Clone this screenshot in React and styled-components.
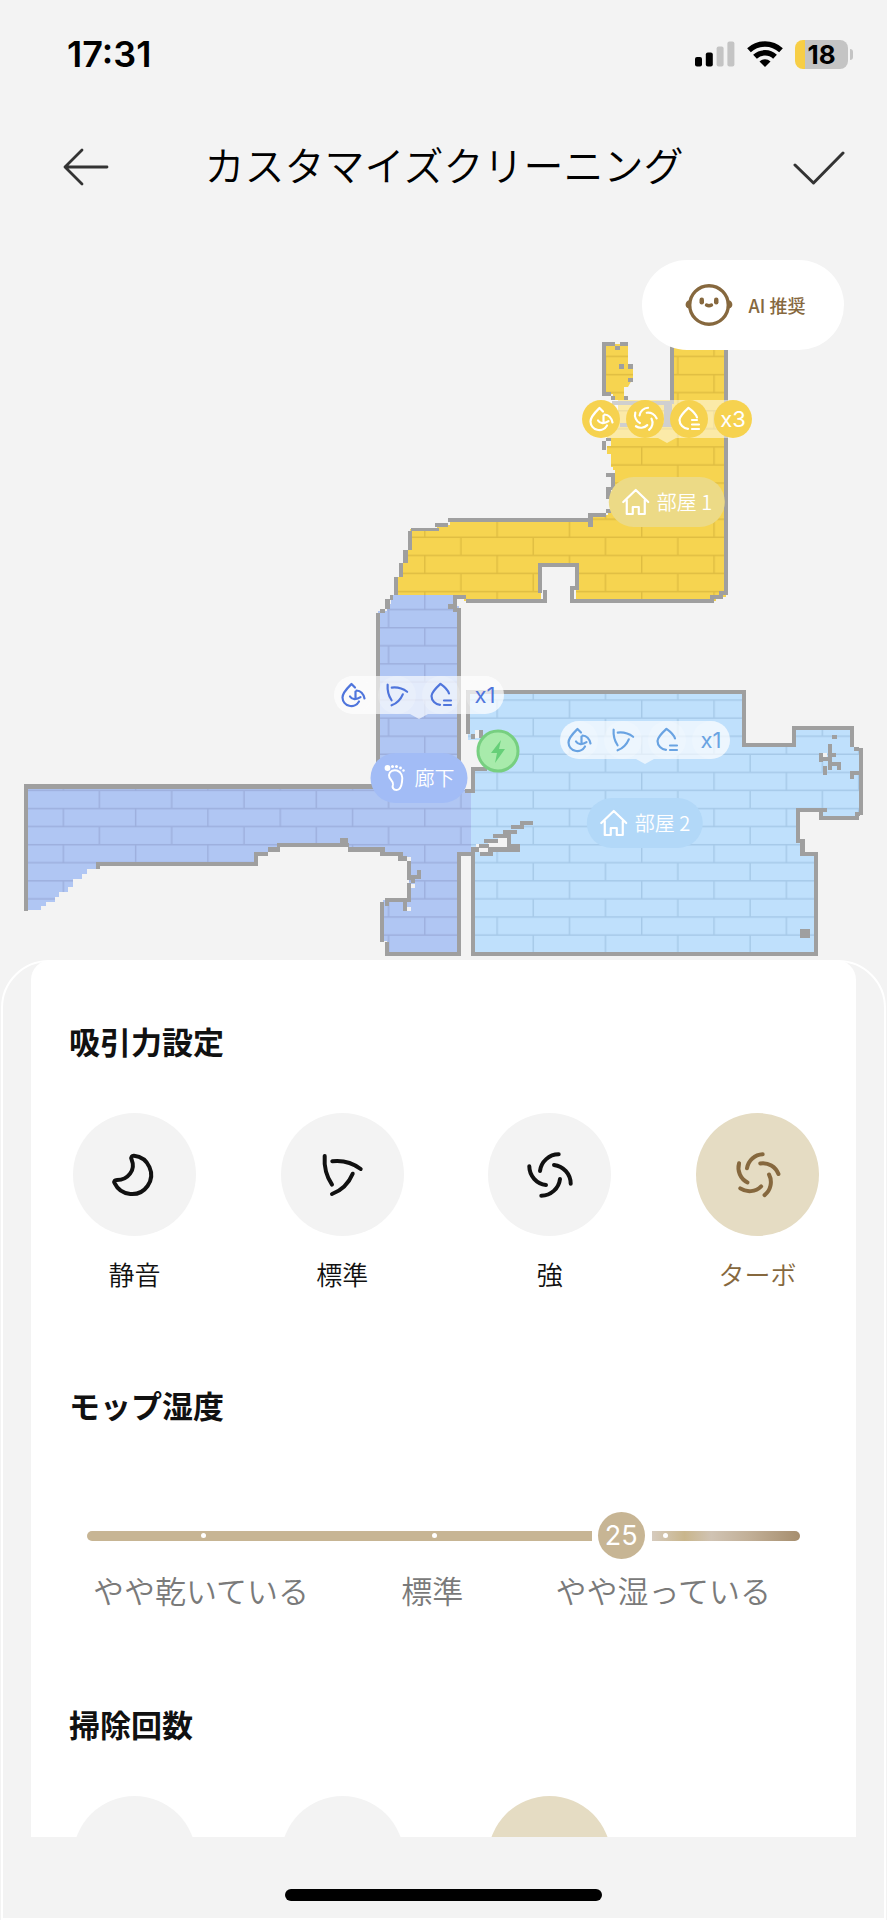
import React, { useState } from 'react';
import styled, { createGlobalStyle } from 'styled-components';

const WALL = '#9f9f9f';
const GAP = '#f3f3f3';

// floor areas, in map units
const ROOM1 = 'M606 344H628V366H633V378L628 387H624V400H670V340H726V597H716V601H576V565H541V601H464V597H396V577H400V563H405V550H410V529H437V525H450V520H590V515H608V509H612V483H615V470H611V455H607V425H618V400H613V394H606Z';
const HALL = 'M394 595H455V606H459V790H471V852H459V954H387V941H383V900H409V859H401V854H383V850H348V845H279V849H268V854H256V864H100V869H87V874H82V879H73V887H68V892H59V897H55V902H46V906H41V910H28V787H378V611H387V604H391V595Z';
const ROOM2 = 'M468 692H744V745H794V728H852V747H858V751H861V814H858V818H821V810H798V841H802V854H816V954H473V852H471V790L473 769H488V740H468Z';

const WALLS = [
  // room 1, upper left nook
  [602, 342, 4, 53], [602, 342, 13, 4], [615, 346, 5, 4], [620, 342, 8, 4], [619, 364, 5, 5],
  [628, 364, 5, 5], [628, 378, 5, 4], [602, 392, 9, 4], [611, 396, 4, 4], [624, 396, 4, 4],
  [612, 401, 60, 4], [664, 401, 8, 26], [620, 423, 48, 4], [670, 340, 4, 64],
  // room 1, east and west sides
  [724, 340, 4, 255], [606, 438, 5, 3], [602, 441, 4, 9], [606, 473, 9, 4], [611, 477, 4, 13],
  [606, 487, 5, 12], [606, 509, 5, 4], [588, 513, 18, 4], [588, 517, 5, 10],
  // room 1, lower wing
  [448, 518, 144, 4], [435, 523, 13, 4], [411, 528, 28, 3], [408, 531, 4, 19], [403, 550, 5, 13],
  [399, 563, 4, 14], [394, 577, 4, 18], [453, 595, 13, 4], [466, 599, 81, 4], [543, 590, 4, 13],
  [538, 563, 4, 30], [538, 563, 40, 4], [575, 563, 4, 27], [570, 586, 4, 17], [570, 586, 8, 4],
  [570, 599, 144, 4], [710, 595, 13, 4], [719, 591, 9, 4],
  // hallway
  [390, 595, 3, 5], [385, 599, 5, 10], [380, 609, 5, 4], [376, 613, 4, 172], [453, 597, 4, 7],
  [448, 604, 9, 5], [453, 608, 8, 4], [457, 608, 4, 158], [24, 784, 354, 5], [24, 784, 4, 127],
  [96, 862, 162, 4], [96, 866, 4, 3], [254, 852, 4, 12], [254, 852, 14, 4], [268, 847, 12, 5],
  [277, 843, 72, 4], [340, 838, 8, 5], [348, 847, 37, 5], [380, 852, 23, 4], [398, 856, 9, 5],
  [407, 861, 4, 19], [411, 875, 10, 4], [417, 870, 4, 5], [411, 879, 4, 4], [407, 883, 4, 18],
  [385, 898, 26, 4], [403, 902, 4, 9], [380, 902, 4, 40], [385, 902, 4, 4], [385, 942, 4, 14],
  [385, 952, 76, 4], [457, 852, 4, 104], [457, 852, 18, 4],
  // room 2
  [466, 690, 280, 4], [466, 690, 4, 44], [471, 734, 4, 5], [479, 730, 4, 8], [471, 767, 4, 26],
  [465, 789, 6, 4], [475, 767, 12, 4], [742, 690, 4, 57], [742, 743, 54, 4], [792, 726, 4, 20],
  [792, 726, 62, 4], [850, 726, 4, 21], [854, 747, 5, 4], [859, 748, 4, 67], [855, 812, 5, 4],
  [819, 816, 40, 4], [819, 808, 4, 12], [796, 808, 31, 4], [796, 808, 4, 35], [800, 839, 5, 17],
  [800, 852, 18, 4], [814, 852, 4, 104], [471, 952, 347, 4], [471, 852, 4, 104],
  [832, 735, 5, 4], [828, 744, 4, 26], [819, 753, 4, 9], [823, 757, 9, 4], [832, 753, 4, 4],
  [832, 762, 9, 4], [837, 762, 4, 8], [823, 766, 4, 9], [850, 771, 9, 4], [850, 775, 4, 4],
  [800, 929, 10, 9],
  // slanted obstacle by the doorway
  [520, 821, 13, 4], [511, 825, 13, 4], [503, 830, 14, 4], [493, 834, 14, 4], [484, 839, 14, 4],
  [479, 844, 10, 4], [471, 847, 8, 5], [488, 847, 32, 5], [507, 833, 4, 15], [511, 844, 9, 5],
  [480, 852, 13, 4],
];

const HOLES = [
  [498, 838, 9, 6], [488, 843, 19, 4], [479, 848, 9, 4], [407, 857, 4, 4], [411, 884, 4, 4],
  [407, 907, 4, 4], [475, 730, 4, 8], [823, 753, 4, 4], [476, 844, 3, 3],
  [607, 441, 4, 5], [607, 454, 4, 5], [607, 467, 6, 5],
];

const ROOMS = [
  { id: 'r1', fill: '#f6d450', line: '#dfbd42', path: ROOM1 },
  { id: 'hall', fill: '#b0c6f3', line: '#9dafdd', path: HALL },
  { id: 'r2', fill: '#bfe0fc', line: '#a6c9e8', path: ROOM2 },
];

const PINS = [
  { id: 'r1', tone: 'yellow', x: 667, y: 400, count: 'x3', fan: 'turbo', drop: 3 },
  { id: 'hall', tone: 'blue', x: 419, y: 676, count: 'x1', fan: 'normal', drop: 2 },
  { id: 'r2', tone: 'sky', x: 645, y: 721, count: 'x1', fan: 'normal', drop: 2 },
];

const TAGS = [
  { id: 'r1', label: '部屋 1', color: '#ecda86', x: 667, y: 477, icon: 'home' },
  { id: 'hall', label: '廊下', color: '#a2bcf6', x: 419, y: 753, icon: 'foot' },
  { id: 'r2', label: '部屋 2', color: '#b2d8f8', x: 645, y: 798, icon: 'home' },
];

const SUCTION = [
  { value: 'quiet', label: '静音' },
  { value: 'normal', label: '標準' },
  { value: 'strong', label: '強' },
  { value: 'turbo', label: 'ターボ' },
];

const MIN = 1;
const MAX = 33;

function FanPaths({ kind }) {
  if (kind === 'quiet') {
    return <path d="M-1 -19.2A19.2 19.2 0 1 1 -20.4 8.2C-21.4 6.2 -20.2 5 -18 5C-7 5 1 -5 -3.4 -15.6C-4.4 -18 -3 -19.4 -1 -19.2Z" />;
  }
  if (kind === 'normal') {
    return <path d="M-17.3 -19Q-18.5 -3 -10 9.7M-9.7 -13.7Q6 -15.5 18.7 -6M10.7 -1.3Q4.5 13.5 -10 19" />;
  }
  const turbo = kind === 'turbo';
  const blades = turbo ? [0, 72, 144, 216, 288] : [0, 90, 180, 270];
  const d = turbo ? 'M5.7 -20.7A16.5 16.5 0 0 0 -10 -6.7' : 'M8.7 -20.7A19 19 0 0 0 -10 -4';
  return blades.map((deg) => <path key={deg} d={d} transform={`rotate(${deg})`} />);
}

function FanIcon({ kind, size = 48, width = 4 }) {
  return (
    <LineIcon width={size} height={size} viewBox="-24 -24 48 48" strokeWidth={width}>
      <FanPaths kind={kind} />
    </LineIcon>
  );
}

function MopIcon() {
  return (
    <LineIcon width="26" height="26" viewBox="-13 -13 26 26" strokeWidth="2.200">
      <path d="M2 -7.500L-1.500 -11C-5 -7.500 -10.500 -2.500 -10.500 2.500A8.800 8.800 0 0 0 6 6.500" />
      <path d="M-3 1.500C-1 4.800 3.500 5 7.500 2.200M2.500 2.500V-3.500M3.500 -4.500C8 -4.200 10.500 -1 11.500 3.500" />
    </LineIcon>
  );
}

function DropIcon({ lines }) {
  return (
    <LineIcon width="26" height="26" viewBox="-13 -13 26 26" strokeWidth="2.200">
      <path d="M-1 9.800A9 9 0 0 1 -9.500 1C-9.500 -3 -4 -8 -0.500 -11.200C4 -8 7 -5 8 -1.500" />
      {lines === 3 && <path d="M3 1H8" />}
      <path d="M3 5.500H10M3 10H10" />
    </LineIcon>
  );
}

function HomeIcon() {
  return (
    <LineIcon width="28" height="28" viewBox="0 0 28 28" strokeWidth="2.200">
      <path d="M1.500 14L14 2L26.500 14M5 12V26H11V19H17V26H23V12" />
    </LineIcon>
  );
}

function FootIcon() {
  return (
    <LineIcon width="24" height="28" viewBox="0 0 24 28" strokeWidth="2">
      <path d="M5.500 11C6 7 10 5.500 13.500 6.500C18 8 19.500 13 18.500 18C18 22 16.500 26 13 26C9.500 26 8.500 23 9.500 20.500C10.500 17 5 15.500 5.500 11Z" />
      <g fill="currentColor" stroke="none">
        <circle cx="4" cy="4" r="2.900" />
        <circle cx="9" cy="2.500" r="1.500" />
        <circle cx="13" cy="2.500" r="1.500" />
        <circle cx="17" cy="4" r="1.400" />
        <circle cx="20" cy="6.500" r="1.200" />
      </g>
    </LineIcon>
  );
}

function RobotIcon() {
  return (
    <LineIcon width="50" height="44" viewBox="-25 -22 50 44" strokeWidth="3.400">
      <circle r="19.300" />
      <g fill="currentColor" stroke="none">
        <path d="M-20 -4.500C-24 -4.500 -25 3 -20 3.500ZM20 -4.500C24 -4.500 25 3 20 3.500Z" />
        <rect x="-9.500" y="-7.500" width="4.500" height="7" rx="2.200" />
        <rect x="5" y="-7.500" width="4.500" height="7" rx="2.200" />
      </g>
      <path d="M-2.500 0Q0 1.500 2.500 0" />
    </LineIcon>
  );
}

function FloorMap() {
  return (
    <MapSvg viewBox="0 240 887 720" aria-hidden="true">
      <defs>
        {ROOMS.map((r) => (
          <pattern key={r.id} id={`brick-${r.id}`} x="568.7" y="699.3" width="72.3" height="36.16" patternUnits="userSpaceOnUse">
            <rect width="72.3" height="36.16" fill={r.fill} />
            <path d="M0 0.700H72.3M0 18.780H72.3M0.700 0V18M36.850 18V36.160" stroke={r.line} strokeWidth="1.400" />
          </pattern>
        ))}
      </defs>
      {ROOMS.map((r) => <path key={r.id} d={r.path} fill={`url(#brick-${r.id})`} />)}
      <g shapeRendering="crispEdges">
        {HOLES.map(([x, y, w, h], i) => <rect key={i} x={x} y={y} width={w} height={h} fill={GAP} />)}
        {WALLS.map(([x, y, w, h], i) => <rect key={i} x={x} y={y} width={w} height={h} fill={WALL} />)}
      </g>
      <circle cx="498" cy="751" r="20" fill="#a8ebab" stroke="#77cf80" strokeWidth="3" />
      <path d="M501 740L491 753H497L495 763L505 749H499Z" fill="#66cf78" />
    </MapSvg>
  );
}

function StatusBar() {
  return (
    <Status>
      <Clock>17:31</Clock>
      <StatusIcons>
        <svg width="40" height="26" viewBox="0 0 40 26">
          <rect x="0" y="16" width="7" height="9.500" rx="2" fill="#000" />
          <rect x="10.800" y="11.500" width="7" height="14" rx="2" fill="#000" />
          <rect x="21.600" y="5.500" width="7" height="20" rx="2" fill="#c4c4c4" />
          <rect x="32.400" y="0.500" width="7" height="25" rx="2" fill="#c4c4c4" />
        </svg>
        <svg width="36" height="26" viewBox="0 0 36 26" fill="none" stroke="#000" strokeWidth="5.400">
          <path d="M2 9.300A23.500 23.500 0 0 1 34 9.300" />
          <path d="M8 15.800A14.500 14.500 0 0 1 28 15.800" />
          <path d="M18 26L12.500 20.500A8 8 0 0 1 23.500 20.500Z" fill="#000" stroke="none" />
        </svg>
        <Battery>18</Battery>
      </StatusIcons>
    </Status>
  );
}

function Options({ name, label, items, value, onChange }) {
  return (
    <OptionGrid role="radiogroup" aria-label={label}>
      {items.map((item) => (
        <Option key={item.value} $active={item.value === value}>
          <HiddenRadio
            type="radio"
            name={name}
            aria-label={item.label || item.value}
            checked={item.value === value}
            onChange={() => onChange(item.value)}
          />
          <Disc $active={item.value === value}>{item.label && <FanIcon kind={item.value} />}</Disc>
          {item.label}
        </Option>
      ))}
    </OptionGrid>
  );
}

function App() {
  const [suction, setSuction] = useState('turbo');
  const [times, setTimes] = useState('x3');
  const [water, setWater] = useState(25);
  const pos = ((water - MIN) / (MAX - MIN)) * 100;

  return (
    <>
      <GlobalStyle />
      <Screen>
        <StatusBar />
        <Header>
          <IconButton aria-label="戻る">
            <LineIcon width="46" height="38" viewBox="0 0 46 38" strokeWidth="2.800">
              <path d="M44 19H2M19 2L2 19L19 36" />
            </LineIcon>
          </IconButton>
          <Title>カスタマイズクリーニング</Title>
          <IconButton aria-label="保存">
            <LineIcon width="52" height="36" viewBox="0 0 52 36" strokeWidth="3">
              <path d="M2 16L20.500 34L50 4" />
            </LineIcon>
          </IconButton>
        </Header>

        <MapArea>
          <FloorMap />
          {PINS.map((p) => (
            <Pin key={p.id} $x={p.x} $y={p.y} $tone={p.tone}>
              <PinDot $tone={p.tone}><MopIcon /></PinDot>
              <PinDot $tone={p.tone}><FanIcon kind={p.fan} size={26} /></PinDot>
              <PinDot $tone={p.tone}><DropIcon lines={p.drop} /></PinDot>
              <PinDot $tone={p.tone}>{p.count}</PinDot>
            </Pin>
          ))}
          {TAGS.map((t) => (
            <Tag key={t.id} $x={t.x} $y={t.y} $color={t.color}>
              {t.icon === 'home' ? <HomeIcon /> : <FootIcon />}
              {t.label}
            </Tag>
          ))}
          <AiButton>
            <RobotIcon />
            AI 推奨
          </AiButton>
        </MapArea>

        <Sheet>
          <Card>
            <Heading>吸引力設定</Heading>
            <Options name="suction" label="吸引力設定" items={SUCTION} value={suction} onChange={setSuction} />

            <Heading>モップ湿度</Heading>
            <Slider>
              <Track style={{ width: `calc(${pos}% - 30px)` }} />
              <Track $rest style={{ width: `calc(${100 - pos}% - 30px)` }} />
              <Stop $at={16.4} />
              <Stop $at={48.8} />
              <Stop $at={81.2} />
              <Thumb style={{ left: `${pos}%` }}>{water}</Thumb>
              <Range
                type="range"
                aria-label="モップ湿度"
                min={MIN}
                max={MAX}
                value={water}
                onChange={(e) => setWater(Number(e.target.value))}
              />
            </Slider>
            <Scale>
              <span>やや乾いている</span>
              <span>標準</span>
              <span>やや湿っている</span>
            </Scale>

            <Heading>掃除回数</Heading>
            <Options
              name="times"
              label="掃除回数"
              items={[{ value: 'x1' }, { value: 'x2' }, { value: 'x3' }]}
              value={times}
              onChange={setTimes}
            />
          </Card>
          <HomeBar />
        </Sheet>
      </Screen>
    </>
  );
}

export default App;

const GlobalStyle = createGlobalStyle`
    * {
        box-sizing: border-box;
    }

    body {
        margin: 0;
        background: #f3f3f3;
        color: #111;
        font-family: Inter, 'Noto Sans CJK JP', sans-serif;
    }

    button {
        border: 0;
        padding: 0;
        background: none;
        color: inherit;
        font: inherit;
        cursor: pointer;
    }
`

const Screen = styled.div`
    height: 100vh;
    display: flex;
    flex-direction: column;
    overflow: hidden;
`

const LineIcon = styled.svg`
    flex: none;
    fill: none;
    stroke: currentColor;
    stroke-linecap: round;
    stroke-linejoin: round;
`

const Status = styled.div`
    flex: none;
    height: 108px;
    padding: 0 39px 0 67px;
    display: flex;
    align-items: center;
    justify-content: space-between;
`

const Clock = styled.div`
    color: #000;
    font-size: 36px;
    font-weight: 600;
`

const StatusIcons = styled.div`
    display: flex;
    align-items: center;
    gap: 12px;
`

const Battery = styled.div`
    position: relative;
    width: 53px;
    height: 29px;
    border-radius: 8px;
    background: linear-gradient(90deg, #f7ce46 10px, #c4c4c4 10px);
    color: #000;
    font-size: 26px;
    font-weight: 700;
    line-height: 29px;
    text-align: center;

    &::after {
        content: '';
        position: absolute;
        top: 9px;
        right: -5px;
        width: 3px;
        height: 11px;
        border-radius: 0 4px 4px 0;
        background: #c4c4c4;
    }
`

const Header = styled.header`
    flex: none;
    height: 132px;
    padding: 0 42px 14px 63px;
    display: grid;
    grid-template-columns: 52px 1fr 52px;
    align-items: center;
`

const Title = styled.h1`
    margin: 0 20px 0 0;
    color: #000;
    font-size: 40px;
    font-weight: 350;
    line-height: 56px;
    text-align: center;
`

const IconButton = styled.button`
    display: flex;
    color: #333;
`

const MapArea = styled.div`
    flex: none;
    position: relative;
`

const MapSvg = styled.svg`
    display: block;
    width: 100%;
`

const TONES = {
  yellow: { strip: 'rgba(255, 255, 255, 0.5)', dot: '#f6d24f', ink: '#fff' },
  blue: { strip: 'rgba(255, 255, 255, 0.65)', dot: 'rgba(255, 255, 255, 0.2)', ink: '#4f75dc' },
  sky: { strip: 'rgba(255, 255, 255, 0.65)', dot: 'rgba(255, 255, 255, 0.2)', ink: '#69a3e2' },
};

const Pin = styled.div`
    position: absolute;
    left: ${({ $x }) => ($x / 887) * 100}%;
    top: ${({ $y }) => (($y - 240) / 720) * 100}%;
    transform: translateX(-50%);
    display: flex;
    gap: 6px;
    border-radius: 19px;
    background: ${({ $tone }) => TONES[$tone].strip};

    &::after {
        content: '';
        position: absolute;
        top: 100%;
        left: 50%;
        margin-left: -9px;
        border: 9px solid transparent;
        border-top: 5px solid ${({ $tone }) => TONES[$tone].strip};
        border-bottom: 0;
    }
`

const PinDot = styled.span`
    width: 38px;
    height: 38px;
    display: flex;
    align-items: center;
    justify-content: center;
    border-radius: 50%;
    background: ${({ $tone }) => TONES[$tone].dot};
    color: ${({ $tone }) => TONES[$tone].ink};
    font-size: 22px;
`

const Tag = styled.div`
    position: absolute;
    left: ${({ $x }) => ($x / 887) * 100}%;
    top: ${({ $y }) => (($y - 240) / 720) * 100}%;
    transform: translateX(-50%);
    height: 50px;
    padding: 0 13px;
    display: flex;
    align-items: center;
    gap: 7px;
    border-radius: 25px;
    background: ${({ $color }) => $color};
    color: #fff;
    font-family: 'Noto Sans CJK JP', sans-serif;
    font-size: 20px;
    font-weight: 350;
    line-height: 28px;
    white-space: nowrap;
`

const AiButton = styled.button`
    position: absolute;
    top: 20px;
    right: 43px;
    width: 202px;
    height: 90px;
    padding-left: 3px;
    display: flex;
    align-items: center;
    justify-content: center;
    gap: 15px;
    border-radius: 45px;
    background: #fff;
    color: #86683e;
    font-family: 'Noto Sans CJK JP', sans-serif;
    font-size: 18px;
    font-weight: 500;
`

const Sheet = styled.main`
    flex: 1;
    min-height: 0;
    margin: 0 1px;
    display: flex;
    flex-direction: column;
    border: 2px solid #fff;
    border-radius: 48px 48px 0 0;
`

const Card = styled.div`
    flex: 1;
    min-height: 0;
    margin: -2px 28px 0;
    padding: 62px 37px 0 42px;
    overflow: hidden;
    border-radius: 20px 20px 0 0;
    background: #fff;
`

const Heading = styled.h2`
    margin: 0 0 49px -4px;
    font-size: 31px;
    font-weight: 700;
    line-height: 42px;
`

const OptionGrid = styled.div`
    margin-bottom: 94px;
    display: grid;
    grid-template-columns: repeat(4, 123px);
    justify-content: space-between;
`

const Option = styled.label`
    position: relative;
    display: flex;
    flex-direction: column;
    align-items: center;
    gap: 24px;
    color: ${({ $active }) => ($active ? '#86683e' : '#111')};
    font-size: 26px;
    font-weight: 350;
    line-height: 32px;
    cursor: pointer;
`

const HiddenRadio = styled.input`
    position: absolute;
    width: 123px;
    height: 123px;
    margin: 0;
    opacity: 0;
`

const Disc = styled.span`
    width: 123px;
    height: 123px;
    display: flex;
    align-items: center;
    justify-content: center;
    border-radius: 50%;
    background: ${({ $active }) => ($active ? '#e5dcc3' : '#f3f3f3')};
`

const Slider = styled.div`
    position: relative;
    height: 47px;
    margin: 84px 19px 12px 14px;
    display: flex;
    align-items: center;
    justify-content: space-between;
`

const Track = styled.span`
    height: 10px;
    border-radius: ${({ $rest }) => ($rest ? '0 5px 5px 0' : '5px 0 0 5px')};
    background: ${({ $rest }) => ($rest
      ? 'linear-gradient(90deg, #d6cbbe, #c9b68c 22%, #d0c3b3 40%, #c2b098 65%, #a68e6e)'
      : '#c7b594')};
`

const Stop = styled.span`
    position: absolute;
    left: ${({ $at }) => $at}%;
    width: 5px;
    height: 5px;
    margin-left: -3px;
    border-radius: 50%;
    background: #fff;
`

const Thumb = styled.span`
    position: absolute;
    width: 47px;
    height: 47px;
    margin-left: -24px;
    border-radius: 50%;
    background: #c7b594;
    color: #fff;
    font-size: 27px;
    line-height: 47px;
    text-align: center;
`

const Range = styled.input`
    position: absolute;
    inset: 0;
    width: 100%;
    margin: 0;
    opacity: 0;
`

const Scale = styled.div`
    margin: 0 48px 92px 20px;
    display: flex;
    justify-content: space-between;
    color: #7a7a7a;
    font-size: 31px;
    font-weight: 350;
    line-height: 42px;
`

const HomeBar = styled.div`
    flex: none;
    width: 36%;
    height: 12px;
    margin: 52px auto 17px;
    border-radius: 6px;
    background: #000;
`
